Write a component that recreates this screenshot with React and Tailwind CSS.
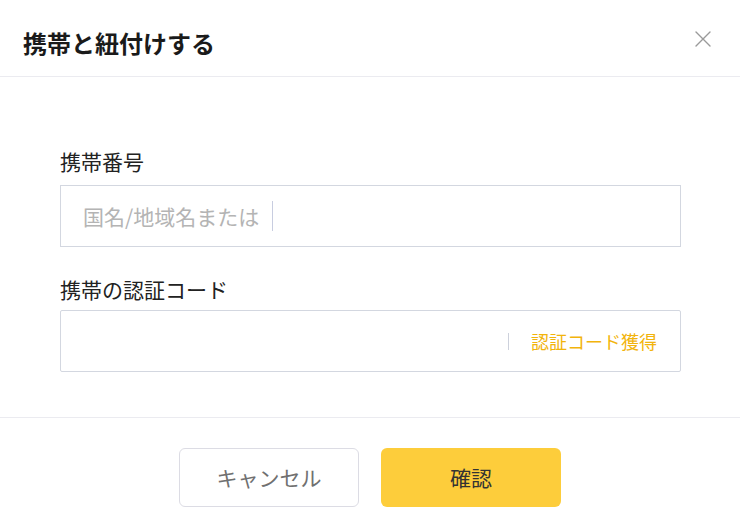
const FONT = "font-['Noto_Sans_CJK_JP','Noto_Sans',sans-serif]";

function CloseIcon() {
    return (
        <svg width="16" height="16" viewBox="0 0 16 16" className="block">
            <path d="M1 1L15 15M15 1L1 15" stroke="#9a9a9a" strokeWidth="1.4" strokeLinecap="round" fill="none"/>
        </svg>
    );
}

export default function App() {
    return (
        <div className={`w-[740px] h-[524px] bg-white overflow-hidden ${FONT}`}>

            {/* HEADER */}
            <div className="h-[77px] border-b border-[#ebebf0] flex items-start justify-between pl-[23px] pr-[29px] pt-[28px]">
                <h1 className="text-[24px] leading-[30px] font-bold text-[#1a1a1a]">
                    携帯と紐付けする
                </h1>
                <button className="mt-[3px]">
                    <CloseIcon/>
                </button>
            </div>

            {/* BODY */}
            <div className="pl-[60px] pr-[59px] pt-[72px] pb-[45px] border-b border-[#ebebf0]">
                <p className="text-[21px] leading-[24px] text-[#222] mb-[12px]">
                    携帯番号
                </p>
                <div className="h-[62px] border border-[#d3d7e0] flex items-center pl-[22px]">
                    <span className="text-[21px] leading-[24px] text-[#b4b4b4]">
                        国名/地域名または
                    </span>
                    <span className="w-px h-[30px] bg-[#c8cde0] ml-[13px]"></span>
                </div>

                <p className="text-[21px] leading-[24px] text-[#222] mt-[30px] mb-[9px]">
                    携帯の認証コード
                </p>
                <div className="h-[62px] border border-[#d3d7e0] rounded-[2px] flex items-center justify-end pr-[23px]">
                    <span className="w-px h-[17px] bg-[#cdd1dc] mr-[22px]"></span>
                    <button className="text-[18px] leading-[24px] text-[#f2b40c]">
                        認証コード獲得
                    </button>
                </div>
            </div>

            {/* FOOTER */}
            <div className="flex justify-center gap-[22px] pt-[30px]">
                <button className="w-[180px] h-[59px] rounded-[6px] border border-[#dcdce4] text-[21px] text-[#707070]">
                    キャンセル
                </button>
                <button className="w-[180px] h-[59px] rounded-[6px] bg-[#fdcd3b] text-[21px] text-[#333]">
                    確認
                </button>
            </div>
        </div>
    );
}
